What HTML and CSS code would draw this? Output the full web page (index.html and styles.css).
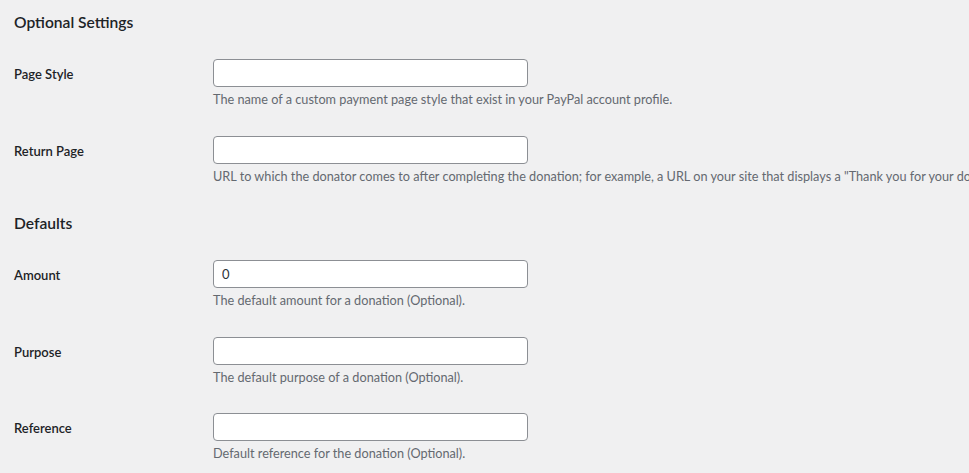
FILE: index.html
```html
<!DOCTYPE html>
<html lang="en">
<head>
    <meta charset="UTF-8">
    <meta name="viewport" content="width=device-width, initial-scale=1.0">
    <title>Donation Settings</title>
    <link rel="stylesheet" href="styles.css">
</head>
<body>
    <div class="wrap">
        <h2 class="section-title">Optional Settings</h2>
        <div class="form-row">
            <label class="field-label" for="page_style">Page Style</label>
            <div class="field">
                <input class="regular-text" type="text" id="page_style">
                <p class="description">The name of a custom payment page style that exist in your PayPal account profile.</p>
            </div>
        </div>
        <div class="form-row">
            <label class="field-label" for="return_page">Return Page</label>
            <div class="field">
                <input class="regular-text" type="text" id="return_page">
                <p class="description">URL to which the donator comes to after completing the donation; for example, a URL on your site that displays a "Thank you for your donation".</p>
            </div>
        </div>

        <h2 class="section-title second">Defaults</h2>
        <div class="form-row compact">
            <label class="field-label" for="amount">Amount</label>
            <div class="field">
                <input class="regular-text" type="text" id="amount" value="0">
                <p class="description">The default amount for a donation (Optional).</p>
            </div>
        </div>
        <div class="form-row compact">
            <label class="field-label" for="purpose">Purpose</label>
            <div class="field">
                <input class="regular-text" type="text" id="purpose">
                <p class="description">The default purpose of a donation (Optional).</p>
            </div>
        </div>
        <div class="form-row compact">
            <label class="field-label" for="reference">Reference</label>
            <div class="field">
                <input class="regular-text" type="text" id="reference">
                <p class="description">Default reference for the donation (Optional).</p>
            </div>
        </div>
    </div>
</body>
</html>
```

FILE: styles.css
```css
html, body {
    overflow: hidden;
}
body {
    margin: 0;
    background-color: #f0f0f1;
    color: #1d2327;
    font-family: Lato, "Liberation Sans", sans-serif;
    font-size: 13px;
}
.wrap {
    padding-left: 14px;
}
.section-title {
    margin: 12px 0 13px;
    font-size: 15.6px;
    line-height: 20px;
    font-weight: 600;
    color: #1d2327;
}
.section-title.second {
    margin-top: 14px;
}
.form-row {
    display: grid;
    grid-template-columns: 199px 1fr;
    padding: 14px 0;
}
.form-row.compact {
    padding-bottom: 13.5px;
}
.field-label {
    font-size: 13px;
    font-weight: 600;
    line-height: 28px;
    padding-top: 1px;
}
.field {
    white-space: nowrap;
}
.regular-text {
    display: block;
    box-sizing: border-box;
    width: 315px;
    height: 28px;
    margin: 0;
    padding: 0 8px;
    border: 1px solid #8c8f94;
    border-radius: 4px;
    background-color: #fff;
    color: #2c3338;
    font-family: inherit;
    font-size: 13px;
}
.description {
    margin: 3px 0 0;
    font-size: 12.7px;
    line-height: 18px;
    color: #646970;
}
```
